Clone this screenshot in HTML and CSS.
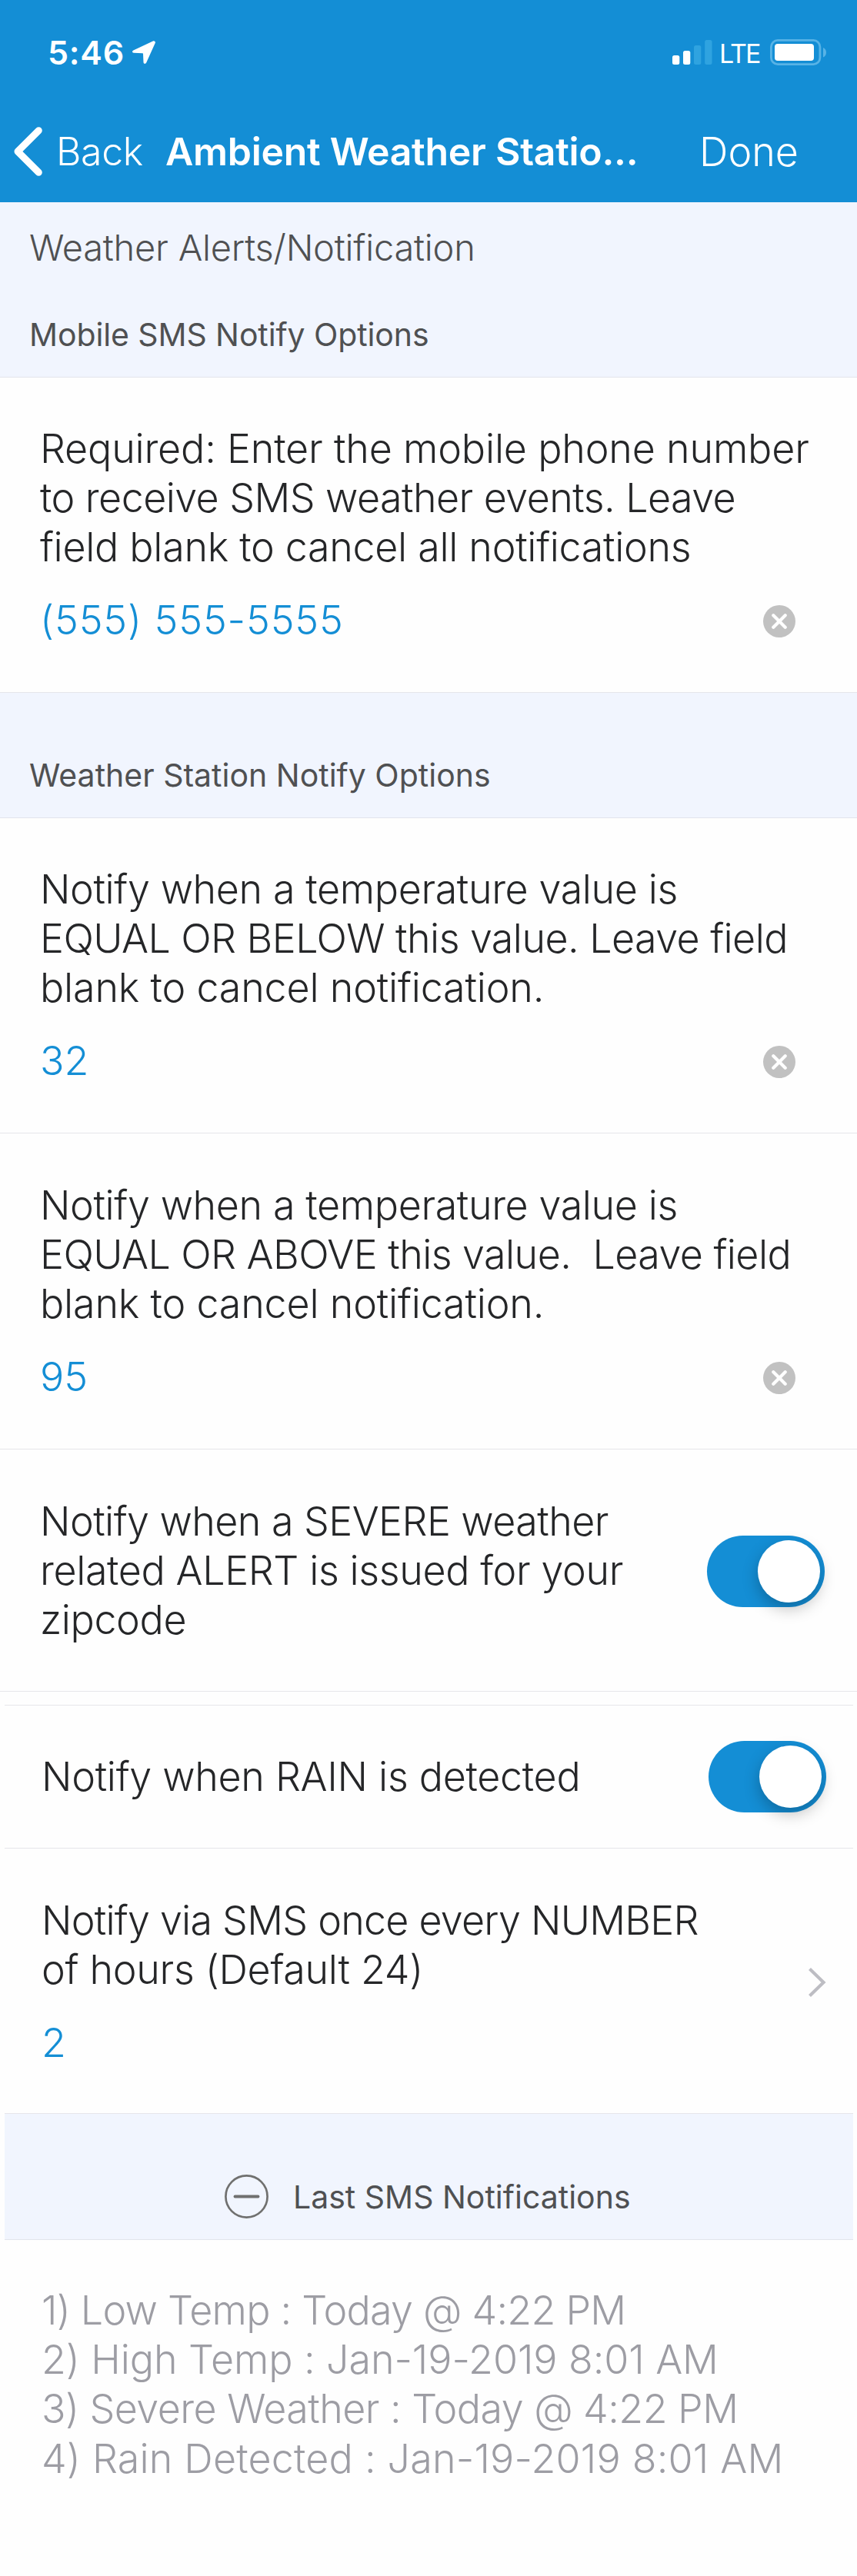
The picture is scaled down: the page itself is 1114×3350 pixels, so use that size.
FILE: index.html
```html
<!DOCTYPE html>
<html lang="en">
<head>
<meta charset="utf-8">
<title>Ambient Weather Station</title>
<link rel="stylesheet" href="styles.css">
</head>
<body>
<header class="header">
  <div class="status">
    <span class="time">5:46</span>
    <svg class="location" width="30" height="30" viewBox="0 0 30 30"><path d="M26.800 .4 1.300 12.600C-.6 13.500-.3 15.700 1.800 15.800L13.300 16.300Q14 16.300 14 17L14.500 27.900C14.600 30.200 17.300 30.500 18.200 28.600L29.700 3.100C30.500 1.300 28.700-.4 26.800 .4Z" fill="#fff"/></svg>
    <svg class="signal" width="52" height="32" viewBox="0 0 52 32"><g fill="#fff"><rect x="0" y="20" width="9.300" height="12" rx="2.500"/><rect x="14" y="14" width="9.300" height="18" rx="2.500"/></g><g fill="#2fa3e0"><rect x="28" y="7" width="9.300" height="25" rx="2.500"/><rect x="42.200" y="0" width="9.300" height="32" rx="2.500"/></g></svg>
    <span class="carrier">LTE</span>
    <svg class="battery" width="73" height="34" viewBox="0 0 73 34"><rect x="1.400" y="1.400" width="63.500" height="31.200" rx="8.500" fill="none" stroke="#58b3e6" stroke-width="2.800"/><rect x="6" y="6" width="51" height="22" rx="4" fill="#fff"/><path d="M69 11c5.300 2 5.300 10.500 0 12.500Z" fill="#58b3e6"/></svg>
  </div>
  <nav class="nav">
    <a class="back"><svg width="38" height="64" viewBox="0 0 38 64"><path d="M32.300 4.700 5 32 32.300 59.300" fill="none" stroke="#fff" stroke-width="9" stroke-linecap="round" stroke-linejoin="round"/></svg><span>Back</span></a>
    <h1 class="title">Ambient Weather Statio...</h1>
    <a class="done">Done</a>
  </nav>
</header>

<section class="band band-first">
  <h2 class="page-name">Weather Alerts/Notification</h2>
  <h3 class="group-name faint">Mobile SMS Notify Options</h3>
</section>

<section class="row">
  <p class="label"><span class="trim">Required: Enter the mobile phone number</span><br><span class="tight">to receive SMS weather events. Leave</span><br><span class="light">field blank to cancel all notifications</span></p>
  <div class="field"><span class="value phone">(555) 555-5555</span><svg class="clear" width="42" height="42" viewBox="0 0 42 42"><circle cx="21" cy="21" r="21" fill="#c1c1c1"/><path d="M13.300 13.300 28.700 28.700M28.700 13.300 13.300 28.700" stroke="#fff" stroke-width="4.200" stroke-linecap="round"/></svg></div>
</section>

<section class="band">
  <h3 class="group-name">Weather Station Notify Options</h3>
</section>

<section class="row">
  <p class="label"><span class="snug">Notify when a temperature value is</span><br><span class="tight">EQUAL OR BELOW this value. Leave field</span><br><span class="trim">blank to cancel notification.</span></p>
  <div class="field"><span class="value">32</span><svg class="clear" width="42" height="42" viewBox="0 0 42 42"><circle cx="21" cy="21" r="21" fill="#c1c1c1"/><path d="M13.300 13.300 28.700 28.700M28.700 13.300 13.300 28.700" stroke="#fff" stroke-width="4.200" stroke-linecap="round"/></svg></div>
</section>

<section class="row row-deep">
  <p class="label"><span class="snug">Notify when a temperature value is</span><br><span class="tight">EQUAL OR ABOVE this value.&nbsp; Leave field</span><br><span class="trim">blank to cancel notification.</span></p>
  <div class="field"><span class="value">95</span><svg class="clear" width="42" height="42" viewBox="0 0 42 42"><circle cx="21" cy="21" r="21" fill="#c1c1c1"/><path d="M13.300 13.300 28.700 28.700M28.700 13.300 13.300 28.700" stroke="#fff" stroke-width="4.200" stroke-linecap="round"/></svg></div>
</section>

<section class="row row-switch row-severe">
  <p class="label"><span class="tight">Notify when a SEVERE weather</span><br><span class="snug">related ALERT is issued for your</span><br><span class="snug">zipcode</span></p>
  <span class="switch"><span class="knob"></span></span>
</section>

<div class="inset">
  <section class="row row-switch row-rain">
    <p class="label"><span class="light">Notify when RAIN is detected</span></p>
    <span class="switch"><span class="knob"></span></span>
  </section>

  <section class="row row-link">
    <div>
      <p class="label"><span class="tighter">Notify via SMS once every NUMBER</span><br><span class="light">of hours (Default 24)</span></p>
      <div class="field"><span class="value">2</span></div>
    </div>
    <svg width="24" height="40" viewBox="0 0 24 40"><path d="M2.500 2.500 20.500 20 2.500 37.500" fill="none" stroke="#bdbdc3" stroke-width="4.200"/></svg>
  </section>

  <section class="band band-toggle">
    <svg width="57" height="57" viewBox="0 0 57 57"><g fill="none" stroke="#70706f"><circle cx="28.500" cy="28.500" r="27.100" stroke-width="2.700"/><path d="M13.500 28.500h30" stroke-width="3.800" stroke-linecap="round"/></g></svg>
    <h3 class="group-name">Last SMS Notifications</h3>
  </section>

  <ol class="log">
    <li class="tighter">1) Low Temp : Today @ 4:22 PM</li>
    <li class="faint">2) High Temp : Jan-19-2019 8:01 AM</li>
    <li class="tight">3) Severe Weather : Today @ 4:22 PM</li>
    <li class="wide">4) Rain Detected : Jan-19-2019 8:01 AM</li>
  </ol>
</div>
</body>
</html>
```
FILE: styles.css
```css
* { box-sizing: border-box; margin: 0; padding: 0; }

body {
  width: 1114px;
  min-height: 3350px;
  background: #fefefe;
  color: #252628;
  font-family: Inter, "Liberation Sans", sans-serif;
  font-weight: 300;
  white-space: nowrap;
}

svg { display: block; flex: none; }

/* Header */
.header { height: 263px; background: #148ed5; color: #fff; }

.status {
  display: flex;
  align-items: center;
  height: 131px;
  padding: 5px 40px 0 62px;
}
.time { width: 110px; font-size: 43px; font-weight: 600; letter-spacing: 0.8px; }
.signal { margin-left: auto; }
.carrier {
  width: 75px;
  padding: 2px 0 0 9px;
  font-size: 34px;
  font-weight: 400;
  letter-spacing: -2px;
}

.nav { display: flex; align-items: center; height: 132px; font-size: 50px; }
.back {
  display: flex;
  align-items: center;
  gap: 17px;
  width: 215px;
  padding-left: 18px;
  letter-spacing: -0.4px;
}
.title { flex: 1; font-size: 50px; font-weight: 600; letter-spacing: -0.3px; }
.done { width: 205px; font-size: 52px; }

/* Tinted section bands */
.band {
  padding: 82px 38px 30px;
  border-bottom: 1px solid #e2e4ec;
  background: #f1f5fe;
  color: #4f5052;
}
.band-first { padding-top: 29px; }
.page-name { margin-bottom: 59px; font-size: 47px; line-height: 59px; font-weight: 300; letter-spacing: -0.24px; }
.group-name { font-size: 41px; line-height: 50px; font-weight: 400; }
.band-toggle { display: flex; align-items: center; gap: 32px; padding: 79px 0 27px 286px; }

/* Setting rows */
.row {
  padding: 61px 42px 61px 52px;
  border-bottom: 1px solid #e6e6ea;
  font-size: 52px;
  line-height: 64px;
}
.row-deep { padding-top: 62px; }
.row-switch, .row-link { display: flex; align-items: center; justify-content: space-between; }
.row-severe { padding-top: 62px; padding-bottom: 60px; }
.row-rain { padding-top: 46px; padding-bottom: 46px; }
.row-link { padding-top: 62px; padding-bottom: 59px; }

.field { display: flex; align-items: center; justify-content: space-between; height: 64px; margin-top: 31px; padding-right: 38px; }
.value { color: #148ed5; }
.phone { letter-spacing: 0.85px; }
.clear { margin-top: 2px; }

/* Tracking steps */
.wide { letter-spacing: 0.17px; }
.faint { letter-spacing: -0.1px; }
.trim { letter-spacing: -0.2px; }
.light { letter-spacing: -0.32px; }
.snug { letter-spacing: -0.4px; }
.tight { letter-spacing: -0.57px; }
.tighter { letter-spacing: -0.78px; }

.switch {
  display: flex;
  justify-content: flex-end;
  flex: none;
  width: 153px;
  height: 93px;
  padding: 6px;
  border-radius: 47px;
  background: #148ed5;
}
.knob {
  width: 81px;
  height: 81px;
  border-radius: 50%;
  background: #fff;
  box-shadow: 0 8px 20px rgba(0, 0, 0, 0.25);
}

/* Inset group */
.inset { margin: 17px 5px 0 6px; border-top: 1px solid #e6e6ea; }
.inset .row { padding-left: 48px; padding-right: 35px; }

.log { padding: 60px 48px 0; color: #9d9da4; font-size: 52px; line-height: 64.200px; list-style: none; }
```
